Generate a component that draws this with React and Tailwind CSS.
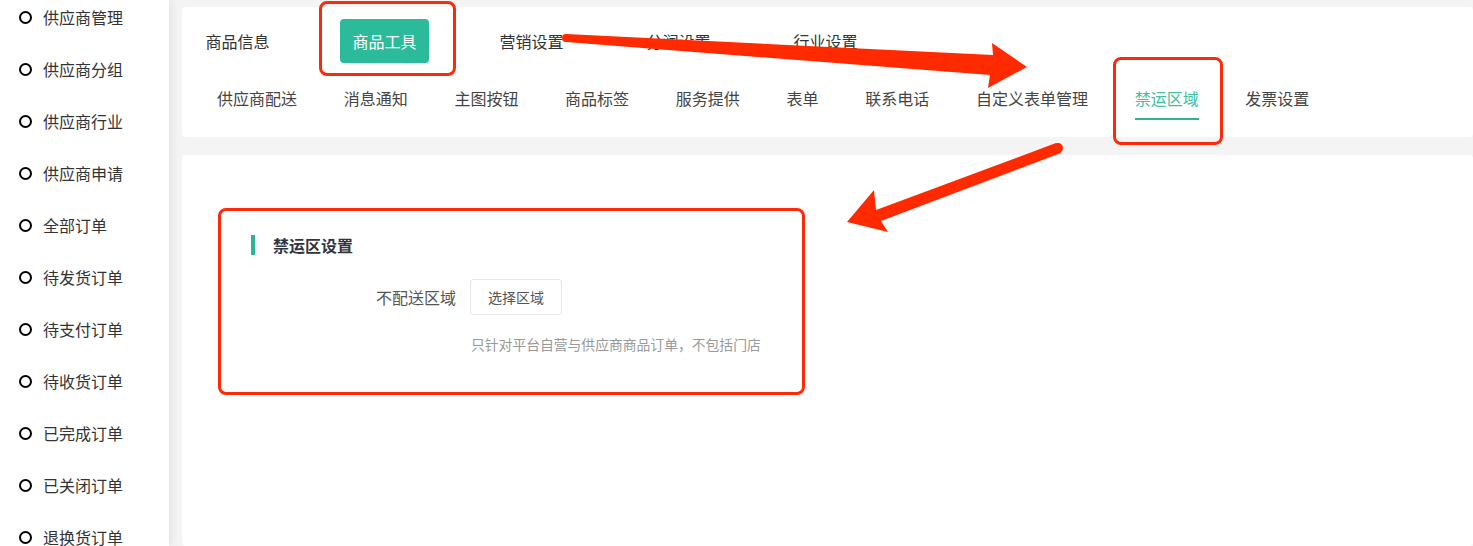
import React from 'react';

const menu = [
  '供应商管理',
  '供应商分组',
  '供应商行业',
  '供应商申请',
  '全部订单',
  '待发货订单',
  '待支付订单',
  '待收货订单',
  '已完成订单',
  '已关闭订单',
  '退换货订单',
];

const mainTabs = ['商品信息', '商品工具', '营销设置', '分润设置', '行业设置'];
const subTabs = [
  '供应商配送',
  '消息通知',
  '主图按钮',
  '商品标签',
  '服务提供',
  '表单',
  '联系电话',
  '自定义表单管理',
  '禁运区域',
  '发票设置',
];

const Sidebar = () => (
  <aside className="relative z-10 w-[169px] shrink-0 bg-white shadow-[3px_0_8px_rgba(0,0,0,0.07)]">
    <ul className="-mt-[9px]">
      {menu.map((item) => (
        <li key={item} className="flex h-[52px] items-center pl-[19px] text-[16px] text-[#333]">
          <span className="h-[13px] w-[13px] rounded-full border-2 border-black" />
          <span className="ml-[11px]">{item}</span>
        </li>
      ))}
    </ul>
  </aside>
);

const TabsCard = () => (
  <div className="h-[130px] rounded-[4px] bg-white pl-[11px] pt-[12px]">
    {/* Top level tabs */}
    <div className="flex gap-[58px]">
      {mainTabs.map((t) => (
        <div
          key={t}
          className={`flex h-[44px] w-[89px] items-center justify-center rounded-[4px] text-[16px] ${
            t === '商品工具' ? 'bg-[#2bbb9b] text-white' : 'text-[#333]'
          }`}
        >
          {t}
        </div>
      ))}
    </div>

    {/* Sub tabs */}
    <div className="mt-[24px] flex gap-[46.7px] pl-[24px]">
      {subTabs.map((t) => {
        const active = t === '禁运区域';
        return (
          <div key={t} className="flex flex-col">
            <span
              className={`text-[16px] leading-[22px] ${active ? 'text-[#3fc1a2]' : 'text-[#444]'}`}
            >
              {t}
            </span>
            <span className={`mt-[9px] h-[2px] ${active ? 'bg-[#2bb597]' : ''}`} />
          </div>
        );
      })}
    </div>
  </div>
);

const ContentCard = () => (
  <div className="mt-[18px] flex-1 rounded-[4px] bg-white pl-[69px] pt-[78px]">
    <div className="flex items-center">
      <span className="h-[20px] w-[4px] bg-[#2bb597]" />
      <span className="ml-[18px] text-[16px] font-bold text-[#303540]">禁运区设置</span>
    </div>

    <div className="mt-[22px] flex items-center">
      <span className="w-[205px] text-right text-[16px] text-[#555]">不配送区域</span>
      <button className="ml-[14px] h-[36px] w-[92px] rounded-[3px] border border-[#e6e6e6] bg-white text-[14px] text-[#555]">
        选择区域
      </button>
    </div>

    <div className="ml-[220px] mt-[19px] text-[13.8px] text-[#999]">
      只针对平台自营与供应商商品订单，不包括门店
    </div>
  </div>
);

const Annotations = () => (
  <div className="pointer-events-none absolute inset-0 z-20">
    <div className="absolute left-[319px] top-[1px] h-[75px] w-[137px] rounded-[8px] border-[3px] border-[#fb2a0b]" />
    <div className="absolute left-[1113px] top-[57px] h-[88px] w-[110px] rounded-[8px] border-[3px] border-[#fb2a0b]" />
    <div className="absolute left-[218px] top-[208px] h-[187px] w-[587px] rounded-[8px] border-[3px] border-[#fb2a0b]" />
    <svg className="absolute left-0 top-0" width="1473" height="546">
      <g fill="#ff2a00">
        <circle cx="566" cy="38" r="4" />
        <polygon points="566,34 993,55 992,43 1027,67 988,88 990,75 566,42" />
        <circle cx="1058" cy="148" r="5" />
        <polygon points="1056,143 876,210 874,190 847,222 888,232 881,221 1061,153" />
      </g>
    </svg>
  </div>
);

export default function App() {
  return (
    <div
      className="relative flex h-[546px] w-[1473px] overflow-hidden bg-[#f4f4f4]"
      style={{ fontFamily: '"Noto Sans CJK SC", "Noto Sans", sans-serif' }}
    >
      <Sidebar />
      <main className="flex flex-1 flex-col pl-[13px] pt-[7px]">
        <TabsCard />
        <ContentCard />
      </main>
      <Annotations />
    </div>
  );
}
